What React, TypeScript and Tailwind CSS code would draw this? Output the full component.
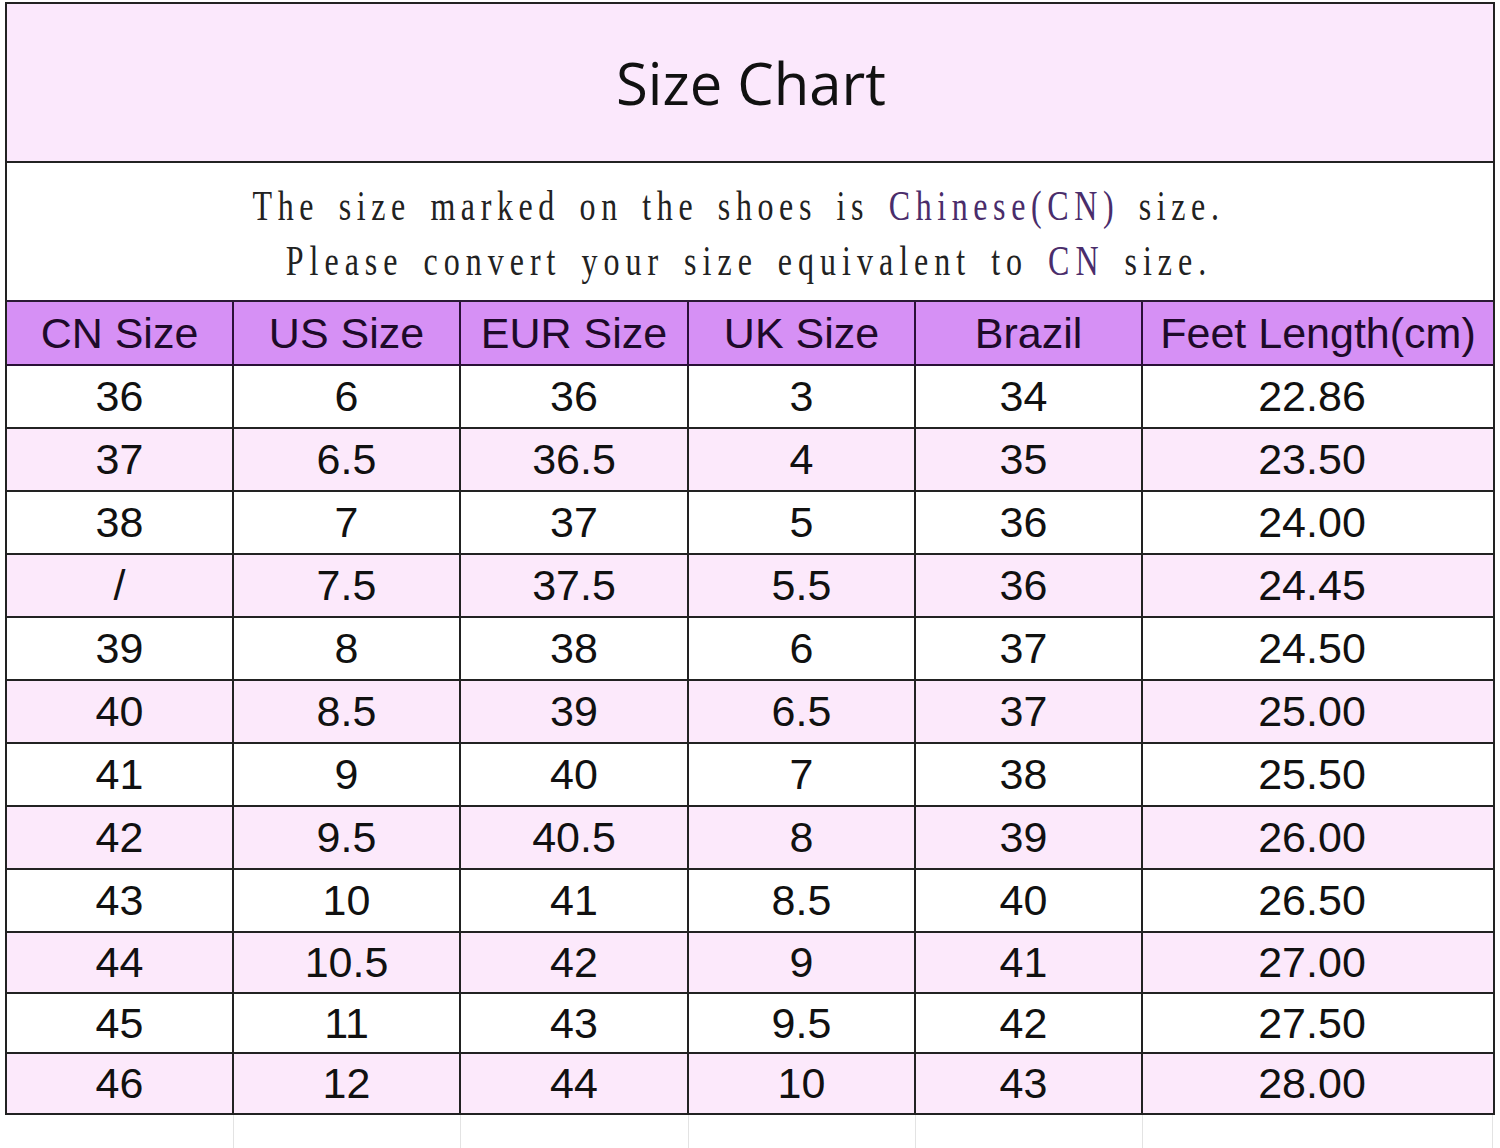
import React from "react";

const cols = ["w-[227px]", "w-[227px]", "w-[228px]", "w-[227px]", "w-[227px]", "w-[350px]"];
// data digits sit a touch left of centre in the last two columns
const nudge = ["", "", "", "", "pr-[10px]", "pr-[12px]"];

const headers = ["CN Size", "US Size", "EUR Size", "UK Size", "Brazil", "Feet Length(cm)"];

const rows = [
  ["36", "6", "36", "3", "34", "22.86"],
  ["37", "6.5", "36.5", "4", "35", "23.50"],
  ["38", "7", "37", "5", "36", "24.00"],
  ["/", "7.5", "37.5", "5.5", "36", "24.45"],
  ["39", "8", "38", "6", "37", "24.50"],
  ["40", "8.5", "39", "6.5", "37", "25.00"],
  ["41", "9", "40", "7", "38", "25.50"],
  ["42", "9.5", "40.5", "8", "39", "26.00"],
  ["43", "10", "41", "8.5", "40", "26.50"],
  ["44", "10.5", "42", "9", "41", "27.00"],
  ["45", "11", "43", "9.5", "42", "27.50"],
  ["46", "12", "44", "10", "43", "28.00"],
];

// row heights incl. bottom border, last one has none (outer border)
const heights = ["h-[63px]", "h-[63px]", "h-[63px]", "h-[63px]", "h-[63px]", "h-[63px]", "h-[63px]", "h-[63px]", "h-[63px]", "h-[61px]", "h-[60px]", "h-[59px]"];

export default function App() {
  return (
    <div className="w-[1500px] h-[1148px] bg-white overflow-hidden pt-[2px] pl-[5px]">
      <div className="w-[1490px] border-2 border-[#222]">
        <div className="h-[159px] bg-[#fbe8fc] border-b-2 border-[#222] flex items-center justify-center">
          <h1 className="text-[58px] text-[#111] font-['Open_Sans',sans-serif] ml-[2px]">Size Chart</h1>
        </div>

        <div className="h-[139px] border-b-2 border-[#2a1a36] flex flex-col items-center pt-[15px] font-['Liberation_Serif',serif] text-[32px] text-[#222] leading-[55px] tracking-[5.6px] [word-spacing:6px]">
          <p className="scale-y-[1.35] -ml-[23px]">
            The size marked on the shoes is <span className="text-[#4a2d6b]">Chinese(CN)</span> size.
          </p>
          <p className="scale-y-[1.35] -ml-[2px] tracking-[6px]">
            Please convert your size equivalent to <span className="text-[#4a2d6b]">CN</span> size.
          </p>
        </div>

        <div className="flex h-[64px] bg-[#d690f5] border-b-2 border-[#2a1038]">
          {headers.map((h, i) => (
            <div
              key={h}
              className={`${cols[i]} ${i < 5 ? "border-r-2 border-[#2a1038]" : ""} flex items-center justify-center text-[43px] text-[#1e0a2a] font-['Liberation_Sans',Arial,sans-serif]`}
            >
              {h}
            </div>
          ))}
        </div>

        {rows.map((r, ri) => (
          <div
            key={ri}
            className={`flex ${heights[ri]} ${ri % 2 === 1 ? "bg-[#fce9fb]" : "bg-white"} ${ri < rows.length - 1 ? "border-b-2 border-[#222]" : ""}`}
          >
            {r.map((v, i) => (
              <div
                key={i}
                className={`${cols[i]} ${nudge[i]} ${i < 5 ? "border-r-2 border-[#222]" : ""} flex items-center justify-center text-[43px] text-[#111] font-['Liberation_Sans',Arial,sans-serif]`}
              >
                {v}
              </div>
            ))}
          </div>
        ))}
      </div>

      <div className="flex w-[1490px] h-[40px] pl-[2px]">
        {cols.map((c, i) => (
          <div key={i} className={`${c} border-r border-[#e3e3e3]`} />
        ))}
      </div>
    </div>
  );
}
